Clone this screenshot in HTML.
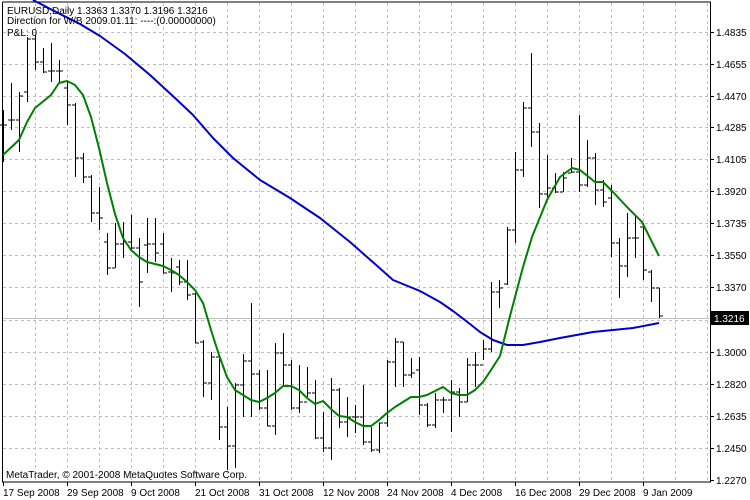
<!DOCTYPE html>
<html><head><meta charset="utf-8"><style>
html,body{margin:0;padding:0;background:#fff;}
svg{display:block;font-family:"Liberation Sans",sans-serif;font-size:10px;}
</style></head><body>
<svg width="750" height="500" viewBox="0 0 750 500" xmlns="http://www.w3.org/2000/svg">
<rect width="750" height="500" fill="#fff"/>
<g stroke="#c0c0c0" stroke-dasharray="3,3" shape-rendering="crispEdges">
<path d="M35.5 3V481M67.5 3V481M99.5 3V481M131.5 3V481M163.5 3V481M195.5 3V481M227.5 3V481M259.5 3V481M291.5 3V481M323.5 3V481M355.5 3V481M387.5 3V481M419.5 3V481M451.5 3V481M483.5 3V481M515.5 3V481M547.5 3V481M579.5 3V481M611.5 3V481M643.5 3V481M675.5 3V481M707.5 3V481"/>
<path d="M3 32.5H710M3 64.5H710M3 96.5H710M3 127.5H710M3 159.5H710M3 191.5H710M3 223.5H710M3 255.5H710M3 287.5H710M3 320.5H710M3 352.5H710M3 384.5H710M3 416.5H710M3 448.5H710"/>
</g>
<path d="M3 318.5H710" stroke="#c0c0c0" shape-rendering="crispEdges"/>
<g stroke="#000" fill="none" shape-rendering="crispEdges">
<path d="M2.5 2V482H710.5V2H2.5"/>
<path d="M710 32.5h4M710 64.5h4M710 96.5h4M710 127.5h4M710 159.5h4M710 191.5h4M710 223.5h4M710 255.5h4M710 287.5h4M710 352.5h4M710 384.5h4M710 416.5h4M710 448.5h4M710 480.5h4"/>
<path d="M3.5 482v4M67.5 482v4M131.5 482v4M195.5 482v4M259.5 482v4M323.5 482v4M387.5 482v4M451.5 482v4M515.5 482v4M579.5 482v4M643.5 482v4"/>
<path d="
M3.5 110V162M0 125H3M3 125H7
M11.5 83V130M8 120H11M11 120H15
M19.5 92V152M16 120H19M19 96H23
M27.5 37V102M24 92H27M27 39H31
M35.5 35V70M32 39H35M35 62H39
M43.5 48V73M40 62H43M43 72H47
M51.5 43V82M48 71H51M51 71H55
M59.5 60V82M56 71H59M59 71H63
M67.5 82V125M64 88H67M67 105H71
M75.5 103V177M72 105H75M75 158H79
M83.5 153V183M80 158H83M83 177H87
M91.5 175V222M88 177H91M91 213H95
M99.5 187V230M96 213H99M99 218H103
M107.5 233V275M104 242H107M107 268H111
M115.5 223V268M112 268H115M115 244H119
M123.5 222V258M120 244H123M123 242H127
M131.5 215V250M128 242H131M131 248H135
M139.5 238V307M136 248H139M139 282H143
M147.5 218V273M144 245H147M147 244H151
M155.5 218V262M152 244H155M155 253H159
M163.5 233V273M160 244H163M163 273H167
M171.5 258V292M168 272H171M171 273H175
M179.5 260V285M176 267H179M179 282H183
M187.5 260V300M184 282H187M187 295H191
M195.5 293V343M192 294H195M195 343H199
M203.5 340V397M200 342H203M203 383H207
M211.5 352V400M208 383H211M211 357H215
M219.5 357V440M216 357H219M219 427H223
M227.5 407V470M224 427H227M227 446H231
M235.5 383V468M232 446H235M235 385H239
M243.5 354V417M240 385H243M243 361H247
M251.5 303V417M248 361H251M251 374H255
M259.5 370V410M256 374H259M259 408H263
M267.5 370V426M264 408H267M267 426H271
M275.5 343V435M272 426H275M275 353H279
M283.5 333V387M280 353H283M283 365H287
M291.5 360V410M288 365H291M291 408H295
M299.5 365V413M296 408H299M299 402H303
M307.5 367V397M304 402H307M307 393H311
M315.5 380V439M312 393H315M315 438H319
M323.5 412V452M320 438H323M323 448H327
M331.5 378V460M328 448H331M331 390H335
M339.5 388V428M336 390H339M339 422H343
M347.5 397V437M344 422H347M347 417H351
M355.5 405V433M352 417H355M355 417H359
M363.5 385V445M360 417H363M363 442H367
M371.5 427V452M368 442H371M371 450H375
M379.5 423V453M376 450H379M379 423H383
M387.5 360V427M384 423H387M387 362H391
M395.5 338V387M392 362H395M395 342H399
M403.5 342V387M400 342H403M403 375H407
M411.5 358V378M408 375H411M411 373H415
M419.5 357V415M416 370H419M419 405H423
M427.5 403V427M424 405H427M427 425H431
M435.5 393V428M432 425H435M435 400H439
M443.5 397V413M440 400H443M443 400H447
M451.5 380V432M448 400H451M451 392H455
M459.5 388V417M456 392H459M459 402H463
M467.5 358V402M464 402H467M467 365H471
M475.5 352V387M472 365H475M475 365H479
M483.5 340V360M480 365H483M483 349H487
M491.5 282V352M488 349H491M491 292H495
M499.5 280V308M496 292H499M499 288H503
M507.5 227V285M504 284H507M507 230H511
M515.5 152V243M512 230H515M515 170H519
M523.5 102V177M520 170H523M523 108H527
M531.5 53V147M528 108H531M531 132H535
M539.5 123V208M536 132H539M539 194H543
M547.5 155V197M544 194H547M547 188H551
M555.5 173V193M552 188H555M555 192H559
M563.5 172V192M560 192H563M563 178H567
M571.5 158V173M568 173H571M571 172H575
M579.5 115V192M576 172H579M579 185H583
M587.5 140V187M584 185H587M587 158H591
M595.5 153V205M592 158H595M595 190H599
M603.5 180V207M600 190H603M603 202H607
M611.5 185V257M608 198H611M611 243H615
M619.5 238V298M616 243H619M619 266H623
M627.5 213V277M624 266H627M627 238H631
M635.5 215V258M632 238H635M635 238H639
M643.5 223V280M640 227H643M643 270H647
M651.5 270V302M648 272H651M651 288H655
M659.5 288V318M656 288H659M659 316H663
"/>
</g>
<polyline fill="none" stroke="#0000cc" stroke-width="2" stroke-linejoin="round" points="33,0 60,14 80,24 100,36 125,54 150,75 175,98 193,115 213,138 233,158 260,180 290,198 320,218 350,242 375,264 393,280 420,291 440,302 453,311 470,324 480,332 493,340 507,345 523,345 540,342 560,338 593,332 633,328 659,323"/>
<polyline fill="none" stroke="#008000" stroke-width="2" stroke-linejoin="round" points="3,155 19,140 27,122 35,108 51,95 59,83 67,81 75,85 83,95 91,117 99,148 107,183 115,214 123,238 131,250 139,257 147,262 155,264 163,266 171,270 179,275 187,282 195,290 203,303 211,330 219,355 227,377 235,390 243,395 251,400 259,402 267,398 275,393 283,386 291,386 299,390 307,398 315,404 323,401 331,409 339,416 347,417 355,422 363,426 371,426 379,420 387,413 395,407 403,402 411,397 419,397 427,395 435,391 443,387 451,393 459,395 467,395 475,390 483,382 491,370 500,356 510,316 523,267 532,237 547,200 560,177 572,168 580,170 595,182 603,182 613,192 627,207 642,222 659,256"/>
<rect x="711" y="311" width="38" height="14" fill="#000"/>
<g fill="#000">
<text x="7" y="14">EURUSD,Daily  1.3363 1.3370 1.3196 1.3216</text>
<text x="7" y="24">Direction for W/B 2009.01.11: ----:(0.00000000)</text>
<text x="7" y="36">P&amp;L: 0</text>
<text x="6" y="478">MetaTrader, © 2001-2008 MetaQuotes Software Corp.</text>
<g>
<text x="716" y="36">1.4835</text><text x="716" y="68">1.4655</text><text x="716" y="100">1.4470</text>
<text x="716" y="131">1.4285</text><text x="716" y="163">1.4105</text><text x="716" y="195">1.3920</text>
<text x="716" y="227">1.3735</text><text x="716" y="259">1.3550</text><text x="716" y="291">1.3370</text>
<text x="716" y="356">1.3000</text><text x="716" y="388">1.2820</text><text x="716" y="420">1.2635</text>
<text x="716" y="452">1.2450</text><text x="716" y="484">1.2270</text>
</g>
<text x="3" y="496">17 Sep 2008</text><text x="67" y="496">29 Sep 2008</text><text x="131" y="496">9 Oct 2008</text>
<text x="195" y="496">21 Oct 2008</text><text x="259" y="496">31 Oct 2008</text><text x="323" y="496">12 Nov 2008</text>
<text x="387" y="496">24 Nov 2008</text><text x="451" y="496">4 Dec 2008</text><text x="515" y="496">16 Dec 2008</text>
<text x="579" y="496">29 Dec 2008</text><text x="643" y="496">9 Jan 2009</text>
</g>
<text x="714" y="322" fill="#fff">1.3216</text>
</svg>
</body></html>
